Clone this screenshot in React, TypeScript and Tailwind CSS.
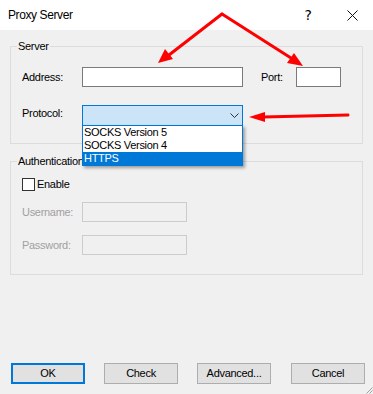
import React from "react";

function Arrows() {
  return (
    <svg className="absolute left-0 top-0 pointer-events-none z-20" width="373" height="394" viewBox="0 0 373 394">
      <g stroke="#ff0000" strokeWidth="3" strokeLinecap="round" fill="none">
        <line x1="222" y1="14" x2="169" y2="55" />
        <line x1="222" y1="14" x2="291" y2="58" />
        <line x1="348" y1="115" x2="263" y2="117" />
      </g>
      <g fill="#ff0000">
        <polygon points="158,63 173,59 165,49" />
        <polygon points="303,66 294,53 287,63" />
        <polygon points="249,117 265,112 265,122" />
      </g>
    </svg>
  );
}

function Input({ w, disabled }: { w: string; disabled?: boolean }) {
  return (
    <div
      className={
        disabled
          ? `${w} h-[20px] border border-[#cccccc] bg-[#f0f0f0]`
          : `${w} h-[20px] border border-[#7a7a7a] bg-white`
      }
    />
  );
}

function Button({ label, def }: { label: string; def?: boolean }) {
  return (
    <div
      className={
        def
          ? "w-[74px] h-[21px] border-2 border-[#0078d7] bg-[#e1e1e1] flex items-center justify-center"
          : "w-[74px] h-[21px] border border-[#adadad] bg-[#e1e1e1] flex items-center justify-center"
      }
    >
      <span className="text-[11px] leading-[13px] text-black">{label}</span>
    </div>
  );
}

export default function App() {
  return (
    <div className="relative w-[373px] h-[394px] bg-[#f0f0f0] overflow-hidden flex flex-col font-['Liberation_Sans',Arial,sans-serif] tracking-[-0.3px] text-black">
      {/* Title bar */}
      <div className="h-[30px] bg-white flex items-center pl-[8px] pr-[15px] shrink-0">
        <span className="text-[12px] leading-[14px] tracking-[-0.4px]">Proxy Server</span>
        <span className="ml-auto mr-[35px] text-[14px] leading-[14px] font-['DejaVu_Sans',sans-serif] tracking-normal">?</span>
        <svg width="11" height="11" viewBox="0 0 11 11">
          <path d="M0.5 0.5 L10.5 10.5 M10.5 0.5 L0.5 10.5" stroke="#111" strokeWidth="1" />
        </svg>
      </div>

      <div className="px-[10px] pt-[16px] flex flex-col">
        {/* Server group */}
        <div className="relative h-[98px] border border-[#dcdcdc] pl-[11px] pt-[20px]">
          <span className="absolute left-[6px] top-[-7px] px-[1px] bg-[#f0f0f0] text-[11px] leading-[13px]">Server</span>
          <div className="flex items-center h-[20px]">
            <span className="w-[60px] text-[11px] leading-[13px]">Address:</span>
            <Input w="w-[161px]" />
            <span className="ml-[18px] w-[35px] text-[11px] leading-[13px]">Port:</span>
            <Input w="w-[45px]" />
          </div>
          <div className="flex items-start mt-[18px]">
            <span className="w-[60px] mt-[2px] text-[11px] leading-[13px]">Protocol:</span>
            <div className="relative w-[161px] h-[21px] border border-[#0078d7] bg-[#cce4f7] z-10">
              <svg className="absolute left-[147px] top-[7px]" width="9" height="5" viewBox="0 0 9 5">
                <path d="M0.5 0.5 L4.5 4.5 L8.5 0.5" stroke="#333" strokeWidth="1" fill="none" />
              </svg>
              <div className="absolute left-[-1px] right-[-1px] top-full border border-[#0078d7] bg-white shadow-[2px_2px_3px_rgba(0,0,0,0.35)] flex flex-col">
                <span className="h-[13px] pl-[1px] text-[11px] leading-[13px]">SOCKS Version 5</span>
                <span className="h-[13px] pl-[1px] text-[11px] leading-[13px]">SOCKS Version 4</span>
                <span className="h-[13px] pl-[1px] text-[11px] leading-[13px] bg-[#0078d7] text-white">HTTPS</span>
              </div>
            </div>
          </div>
        </div>

        {/* Authentication group */}
        <div className="relative mt-[17px] h-[114px] border border-[#dcdcdc] pl-[11px] pt-[16px]">
          <span className="absolute left-[6px] top-[-7px] px-[1px] bg-[#f0f0f0] text-[11px] leading-[13px]">Authentication</span>
          <div className="flex items-center h-[13px]">
            <div className="w-[13px] h-[13px] border border-[#333333] bg-white" />
            <span className="ml-[2px] text-[11px] leading-[13px]">Enable</span>
          </div>
          <div className="flex items-center mt-[11px]">
            <span className="w-[60px] text-[11px] leading-[13px] text-[#a0a0a0]">Username:</span>
            <Input w="w-[105px]" disabled />
          </div>
          <div className="flex items-center mt-[13px]">
            <span className="w-[60px] text-[11px] leading-[13px] text-[#a0a0a0]">Password:</span>
            <Input w="w-[105px]" disabled />
          </div>
        </div>
      </div>

      {/* Buttons */}
      <div className="mt-auto pb-[10px] pl-[11px] flex">
        <Button label="OK" def />
        <div className="ml-[19px]"><Button label="Check" /></div>
        <div className="ml-[19px]"><Button label="Advanced..." /></div>
        <div className="ml-[20px]"><Button label="Cancel" /></div>
      </div>

      {/* Resize grip */}
      <svg className="absolute right-0 bottom-0" width="8" height="8" viewBox="0 0 8 8">
        <path d="M7.5 1.5 L1.5 7.5 M7.5 4.5 L4.5 7.5" stroke="#a0a0a0" strokeWidth="1" />
      </svg>

      <Arrows />
    </div>
  );
}
